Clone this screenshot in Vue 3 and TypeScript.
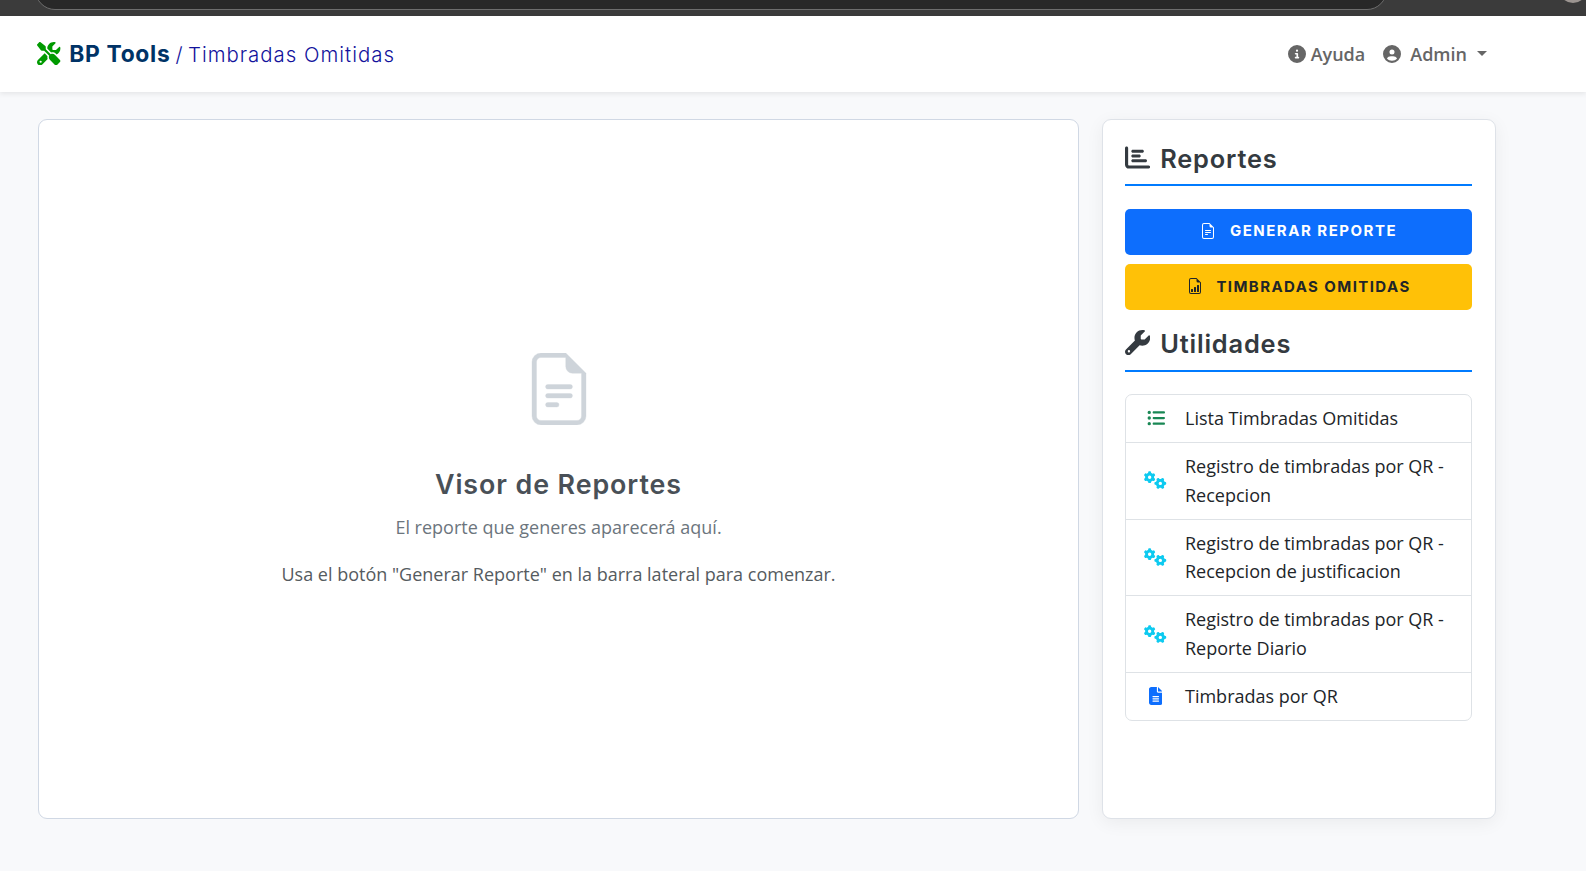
<script setup lang="ts">
interface Utility {
  label: string
  icon: 'bullets' | 'gears' | 'file'
}

const utilities: Utility[] = [
  { label: 'Lista Timbradas Omitidas', icon: 'bullets' },
  { label: 'Registro de timbradas por QR - Recepcion', icon: 'gears' },
  { label: 'Registro de timbradas por QR - Recepcion de justificacion', icon: 'gears' },
  { label: 'Registro de timbradas por QR - Reporte Diario', icon: 'gears' },
  { label: 'Timbradas por QR', icon: 'file' },
]

const gear =
  'M308.5 135.3c7.1-6.3 9.9-16.2 6.2-25c-2.3-5.3-4.8-10.5-7.6-15.5L304 89.4c-3-5-6.3-9.9-9.8-14.6c-5.7-7.6-15.7-10.1-24.7-7.1l-28.2 9.3c-10.7-8.8-23-16-36.2-20.9L199 27.1c-1.9-9.3-9.1-16.7-18.5-17.8C173.9 8.4 167.2 8 160.4 8h-.7c-6.8 0-13.5 .4-20.1 1.2c-9.4 1.1-16.6 8.6-18.5 17.8L115 56.1c-13.3 5-25.5 12.1-36.2 20.9L50.5 67.8c-9-3-19-.5-24.7 7.1c-3.5 4.7-6.8 9.6-9.9 14.6l-3 5.3c-2.8 5-5.3 10.2-7.6 15.6c-3.7 8.7-.9 18.6 6.2 25l22.2 19.8C32.6 161.9 32 168.9 32 176s.6 14.1 1.7 20.9L11.5 216.7c-7.1 6.3-9.9 16.2-6.2 25c2.3 5.3 4.8 10.5 7.6 15.6l3 5.2c3 5.1 6.3 9.9 9.9 14.6c5.7 7.6 15.7 10.1 24.7 7.1l28.2-9.3c10.7 8.8 23 16 36.2 20.9l6.1 29.1c1.9 9.3 9.1 16.7 18.5 17.8c6.7 .8 13.5 1.2 20.4 1.2s13.7-.4 20.4-1.2c9.4-1.1 16.6-8.6 18.5-17.8l6.1-29.1c13.3-5 25.5-12.1 36.2-20.9l28.2 9.3c9 3 19 .5 24.7-7.1c3.5-4.7 6.8-9.5 9.8-14.6l3.1-5.4c2.8-5 5.3-10.2 7.6-15.5c3.7-8.7 .9-18.6-6.2-25l-22.2-19.8c1.1-6.8 1.7-13.8 1.7-20.9s-.6-14.1-1.7-20.9l22.2-19.8zM112 176a48 48 0 1 1 96 0 48 48 0 1 1 -96 0z'

const sheet =
  'M14 14V4.5L9.5 0H4a2 2 0 0 0-2 2v12a2 2 0 0 0 2 2h8a2 2 0 0 0 2-2zM9.5 3A1.5 1.5 0 0 0 11 4.5h2V14a1 1 0 0 1-1 1H4a1 1 0 0 1-1-1V2a1 1 0 0 1 1-1h5.5v2z'
const sheetLines =
  'M5.5 7a.5.5 0 0 0 0 1h5a.5.5 0 0 0 0-1h-5zM5 9.5a.5.5 0 0 1 .5-.5h5a.5.5 0 0 1 0 1h-5a.5.5 0 0 1-.5-.5zm0 2a.5.5 0 0 1 .5-.5h2a.5.5 0 0 1 0 1h-2a.5.5 0 0 1-.5-.5z'
const sheetBars =
  'M10 13.5a.5.5 0 0 0 .5.5h1a.5.5 0 0 0 .5-.5v-6a.5.5 0 0 0-.5-.5h-1a.5.5 0 0 0-.5.5v6zm-2.5.5a.5.5 0 0 1-.5-.5v-4a.5.5 0 0 1 .5-.5h1a.5.5 0 0 1 .5.5v4a.5.5 0 0 1-.5.5h-1zm-3 0a.5.5 0 0 1-.5-.5v-2a.5.5 0 0 1 .5-.5h1a.5.5 0 0 1 .5.5v2a.5.5 0 0 1-.5.5h-1z'
</script>

<template>
  <div class="page">
    <div class="chrome">
      <div class="address"></div>
      <div class="avatar"></div>
    </div>

    <header class="navbar">
      <a class="brand">
        <svg class="brand-icon" viewBox="0 0 512 512"><path d="M78.6 5C69.1-2.4 55.6-1.5 47 7L7 47c-8.5 8.5-9.4 22-2.1 31.6l80 104c4.5 5.9 11.6 9.4 19 9.4h54.1l109 109c-14.7 29-10 65.4 14.3 89.6l112 112c12.5 12.5 32.8 12.5 45.3 0l64-64c12.5-12.5 12.5-32.8 0-45.3l-112-112c-24.2-24.2-60.6-29-89.6-14.3l-109-109V104c0-7.5-3.5-14.5-9.4-19L78.6 5zM19.9 396.1C7.2 408.8 0 426.1 0 444.1C0 481.6 30.4 512 67.9 512c18 0 35.3-7.2 48-19.9L233.7 374.3c-7.8-20.9-9-43.6-3.6-65.1l-61.7-61.7L19.9 396.1zM512 144c0-10.5-1.1-20.7-3.2-30.5c-2.4-11.2-16.1-14.1-24.2-6l-63.9 63.9c-3 3-7.1 4.7-11.3 4.7H352c-8.8 0-16-7.2-16-16V102.6c0-4.2 1.7-8.3 4.7-11.3l63.9-63.9c8.1-8.1 5.2-21.8-6-24.2C388.7 1.1 378.5 0 368 0C288.5 0 224 64.5 224 144l0 .8 85.3 85.3c36-9.1 75.8 .5 104 28.7L429 274.5c49-23 83-72.8 83-130.5zM56 432a24 24 0 1 1 48 0 24 24 0 1 1 -48 0z" /></svg>
        <span class="brand-name">BP Tools</span>
        <span class="slash">/</span>
        <span class="section">Timbradas Omitidas</span>
      </a>
      <nav class="menu">
        <a class="help">
          <svg class="menu-icon" viewBox="0 0 512 512"><path d="M256 512A256 256 0 1 0 256 0a256 256 0 1 0 0 512zM216 336h24V272H216c-13.3 0-24-10.7-24-24s10.7-24 24-24h48c13.3 0 24 10.7 24 24v88h8c13.3 0 24 10.7 24 24s-10.7 24-24 24H216c-13.3 0-24-10.7-24-24s10.7-24 24-24zm40-208a32 32 0 1 1 0 64 32 32 0 1 1 0-64z" /></svg>
          <span>Ayuda</span>
        </a>
        <a class="user">
          <svg class="menu-icon" viewBox="0 0 512 512"><path d="M399 384.2C376.9 345.8 335.4 320 288 320H224c-47.4 0-88.9 25.8-111 64.2c35.2 39.2 86.2 63.8 143 63.8s107.8-24.7 143-63.8zM0 256a256 256 0 1 1 512 0A256 256 0 1 1 0 256zm256 16a72 72 0 1 0 0-144 72 72 0 1 0 0 144z" /></svg>
          <span>Admin</span>
          <i class="caret"></i>
        </a>
      </nav>
    </header>

    <main class="content">
      <section class="viewer">
        <svg class="viewer-icon" viewBox="0 0 16 16"><path :d="sheetLines" /><path :d="sheet" /></svg>
        <h1>Visor de Reportes</h1>
        <p class="lead">El reporte que generes aparecerá aquí.</p>
        <p class="hint">Usa el botón "Generar Reporte" en la barra lateral para comenzar.</p>
      </section>

      <aside class="sidebar">
        <h2>
          <svg viewBox="0 0 512 512"><path d="M32 32c17.7 0 32 14.3 32 32V400c0 8.8 7.2 16 16 16H480c17.7 0 32 14.3 32 32s-14.3 32-32 32H80c-44.2 0-80-35.8-80-80V64C0 46.3 14.3 32 32 32zm96 96c0-17.7 14.3-32 32-32l192 0c17.7 0 32 14.3 32 32s-14.3 32-32 32l-192 0c-17.7 0-32-14.3-32-32zm32 64H288c17.7 0 32 14.3 32 32s-14.3 32-32 32H160c-17.7 0-32-14.3-32-32s14.3-32 32-32zm0 96H416c17.7 0 32 14.3 32 32s-14.3 32-32 32H160c-17.7 0-32-14.3-32-32s14.3-32 32-32z" /></svg>
          <span>Reportes</span>
        </h2>
        <button class="btn primary" type="button">
          <svg viewBox="0 0 16 16"><path :d="sheetLines" /><path :d="sheet" /></svg>
          <span>GENERAR REPORTE</span>
        </button>
        <button class="btn warning" type="button">
          <svg viewBox="0 0 16 16"><path :d="sheetBars" /><path :d="sheet" /></svg>
          <span>TIMBRADAS OMITIDAS</span>
        </button>
        <h2 class="second">
          <svg viewBox="0 0 512 512"><path d="M352 320c88.4 0 160-71.6 160-160c0-15.3-2.2-30.1-6.2-44.2c-3.1-10.8-16.4-13.2-24.3-5.3l-76.8 76.8c-3 3-7.1 4.7-11.3 4.7H336c-8.8 0-16-7.2-16-16V118.6c0-4.2 1.7-8.3 4.7-11.3l76.8-76.8c7.9-7.9 5.4-21.2-5.3-24.3C382.1 2.2 367.3 0 352 0C263.6 0 192 71.6 192 160c0 19.1 3.4 37.5 9.5 54.5L19.9 396.1C7.2 408.8 0 426.1 0 444.1C0 481.6 30.4 512 67.9 512c18 0 35.3-7.2 48-19.9L297.5 310.5c17 6.2 35.4 9.5 54.5 9.5zM80 408a24 24 0 1 1 0 48 24 24 0 1 1 0-48z" /></svg>
          <span>Utilidades</span>
        </h2>
        <ul class="list">
          <li v-for="item in utilities" :key="item.label">
            <span class="list-icon" :class="item.icon">
              <svg v-if="item.icon === 'bullets'" viewBox="0 0 512 512"><path d="M64 144a48 48 0 1 0 0-96 48 48 0 1 0 0 96zM192 64c-17.7 0-32 14.3-32 32s14.3 32 32 32H480c17.7 0 32-14.3 32-32s-14.3-32-32-32H192zm0 160c-17.7 0-32 14.3-32 32s14.3 32 32 32H480c17.7 0 32-14.3 32-32s-14.3-32-32-32H192zm0 160c-17.7 0-32 14.3-32 32s14.3 32 32 32H480c17.7 0 32-14.3 32-32s-14.3-32-32-32H192zM64 464a48 48 0 1 0 0-96 48 48 0 1 0 0 96zm48-208a48 48 0 1 0-96 0 48 48 0 1 0 96 0z" /></svg>
              <svg v-else-if="item.icon === 'gears'" viewBox="0 0 640 512"><path :d="gear" /><path :d="gear" transform="translate(464 352) rotate(90) translate(-160 -176)" /></svg>
              <svg v-else viewBox="0 0 384 512"><path d="M64 0C28.7 0 0 28.7 0 64V448c0 35.3 28.7 64 64 64H320c35.3 0 64-28.7 64-64V160H256c-17.7 0-32-14.3-32-32V0H64zM256 0V128H384L256 0zM112 256H272c8.8 0 16 7.2 16 16s-7.2 16-16 16H112c-8.8 0-16-7.2-16-16s7.2-16 16-16zm0 64H272c8.8 0 16 7.2 16 16s-7.2 16-16 16H112c-8.8 0-16-7.2-16-16s7.2-16 16-16zm0 64H272c8.8 0 16 7.2 16 16s-7.2 16-16 16H112c-8.8 0-16-7.2-16-16s7.2-16 16-16z" /></svg>
            </span>
            <span>{{ item.label }}</span>
          </li>
        </ul>
      </aside>
    </main>
  </div>
</template>

<style>
body {
  margin: 0;
  background: #f8f9fb;
}
</style>

<style scoped>
.page {
  box-sizing: border-box;
  height: 871px;
  display: flex;
  flex-direction: column;
  overflow: hidden;
  background: #f8f9fb;
  color: #212529;
  font: 18px/28.8px 'Open Sans', 'Noto Sans', sans-serif;
}
.page * {
  box-sizing: border-box;
}
svg {
  display: block;
  flex: none;
  fill: currentColor;
}
.chrome {
  position: relative;
  flex: none;
  height: 16px;
  overflow: hidden;
  background: #3b3b3b;
}
.address {
  position: absolute;
  left: 35px;
  top: -30px;
  width: 1352px;
  height: 40px;
  border: 1px solid #6d6d6d;
  border-radius: 20px;
  background: #282828;
}
.avatar {
  position: absolute;
  left: 1559px;
  top: -25px;
  width: 28px;
  height: 28px;
  border-radius: 50%;
  background: #9c9591;
}
.navbar {
  position: relative;
  flex: none;
  height: 76px;
  padding: 0 99px 0 37.3px;
  display: flex;
  align-items: center;
  justify-content: space-between;
  background: #fff;
  box-shadow: 0 2px 5px rgba(0, 0, 0, 0.08);
}
.brand {
  display: flex;
  align-items: baseline;
  padding-top: 2px;
  font-family: Inter, sans-serif;
  white-space: nowrap;
}
.brand-icon {
  width: 23.4px;
  height: 23.4px;
  margin: -3px 8.5px 0 0;
  align-self: center;
  color: #009a00;
}
.brand-name {
  font-size: 22.8px;
  font-weight: 700;
  letter-spacing: 0.7px;
  color: #003366;
}
.slash,
.section {
  font-size: 20.4px;
  font-weight: 300;
  color: #12129c;
}
.slash {
  margin-left: 5px;
}
.section {
  margin-left: 5.5px;
  letter-spacing: 1px;
}
.menu,
.help,
.user {
  display: flex;
  align-items: center;
}
.menu {
  color: #666;
  font-weight: 600;
}
.menu-icon {
  width: 18px;
  height: 18px;
}
.help {
  gap: 5px;
  margin-right: 18px;
}
.user .menu-icon {
  margin-right: 9px;
}
.caret {
  margin: -1px 0 0 10px;
  border: 5px solid transparent;
  border-top-color: currentColor;
  border-bottom: 0;
}
.content {
  flex: none;
  height: 700px;
  margin: 27px 90px 0 38px;
  display: grid;
  grid-template-columns: 1041px 394px;
  gap: 23px;
}
.viewer,
.sidebar {
  background: #fff;
  border-radius: 9px;
}
.viewer {
  border: 1px solid #d0d8e4;
  padding-top: 233px;
  display: flex;
  flex-direction: column;
  align-items: center;
}
.viewer-icon {
  width: 72px;
  height: 72px;
  color: #ced4da;
  stroke: currentColor;
  stroke-width: 0.08;
}
h1,
h2,
p,
ul {
  margin: 0;
}
h1 {
  margin-top: 42px;
  font: 600 26.8px/34px Inter, sans-serif;
  letter-spacing: 0.93px;
  color: #495057;
}
.lead {
  margin-top: 12px;
  color: #6c757d;
}
.hint {
  margin-top: 18px;
  color: #555b60;
}
.sidebar {
  border: 1px solid #dee2e8;
  padding: 22px 23px 0 22px;
  box-shadow: 0 4px 18px rgba(0, 0, 0, 0.06);
}
h2 {
  height: 44px;
  padding-top: 4px;
  display: flex;
  align-items: flex-start;
  border-bottom: 2px solid #007bff;
  font: 600 25.4px/25px Inter, sans-serif;
  letter-spacing: 0.82px;
  color: #343a40;
}
h2 svg {
  width: 25.2px;
  height: 25.2px;
  margin: -1px 10px 0 0;
}
.btn {
  width: 100%;
  height: 46px;
  margin-top: 9px;
  padding: 0 0 2px;
  display: flex;
  align-items: center;
  justify-content: center;
  gap: 14px;
  border: 0;
  border-radius: 5px;
  font: 700 15px/20px Inter, sans-serif;
}
.btn svg {
  width: 16px;
  height: 16px;
}
.primary {
  margin-top: 23px;
  background: #0d6efd;
  color: #fff;
  letter-spacing: 1.5px;
}
.warning {
  background: #ffc107;
  color: #212529;
  letter-spacing: 1.42px;
}
.warning svg {
  margin: 0 -1px 0 1px;
}
.warning span {
  padding-top: 2px;
}
.second {
  height: 43px;
  margin-top: 19px;
  padding-top: 2px;
}
.list {
  margin-top: 22.3px;
  padding: 0;
  list-style: none;
  border: 1px solid #dee2e6;
  border-radius: 7px;
}
.list li {
  display: flex;
  align-items: center;
  padding: 9px 18px;
}
.list li + li {
  border-top: 1px solid #dee2e6;
}
.list-icon {
  flex: none;
  width: 23px;
  margin-right: 18px;
  display: flex;
  justify-content: center;
}
.list-icon svg {
  height: 18px;
}
.bullets {
  color: #198754;
}
.bullets svg {
  margin-top: -1px;
}
.gears {
  color: #0dcaf0;
}
.gears svg {
  margin-top: -1px;
}
.file {
  color: #0d6efd;
}
</style>
